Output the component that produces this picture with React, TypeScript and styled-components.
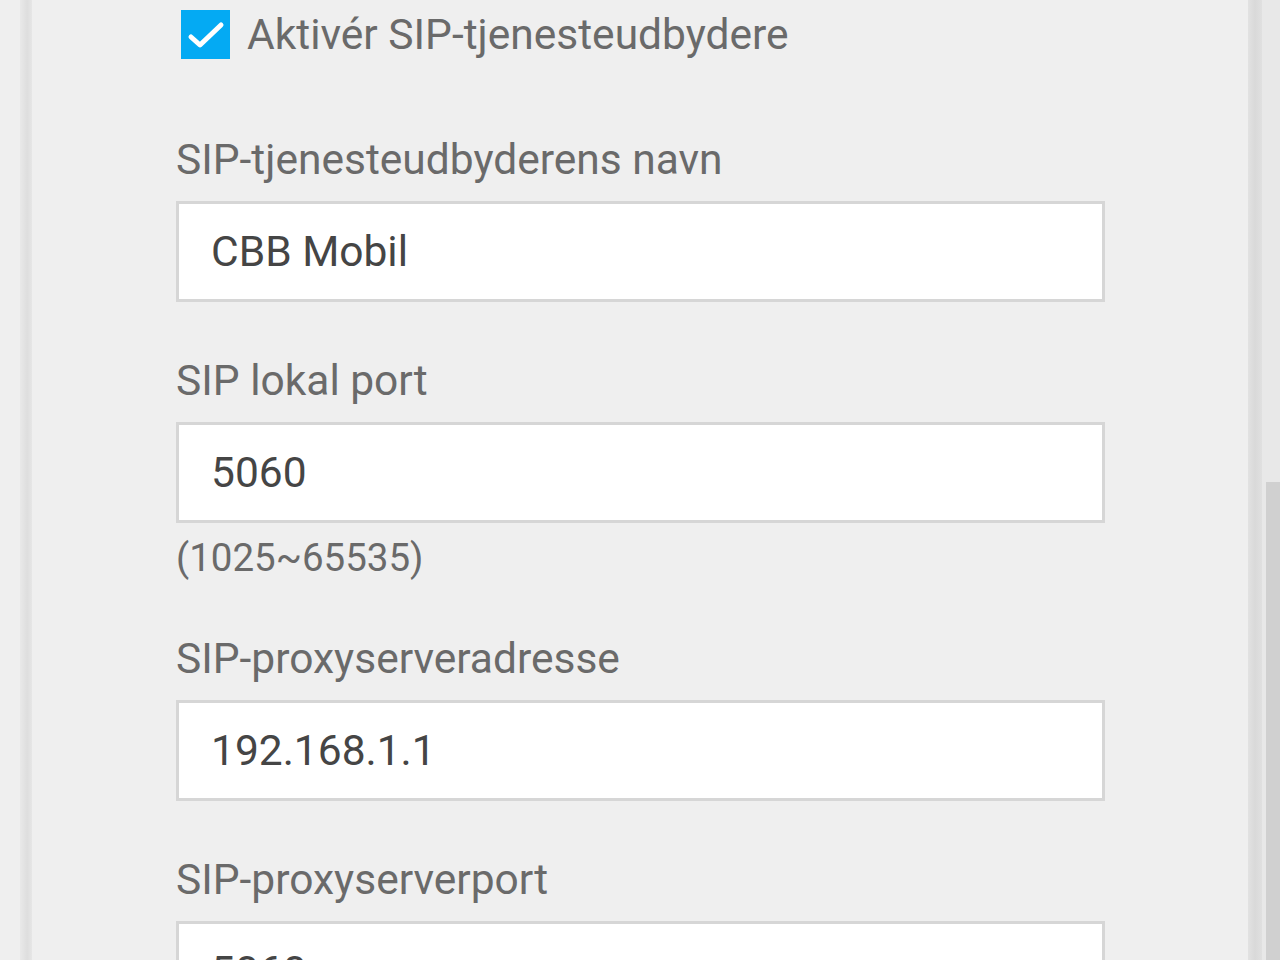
import styled, { createGlobalStyle } from "styled-components";

const GlobalStyle = createGlobalStyle`
  html, body {
    margin: 0;
    padding: 0;
    background: #ececec;
    font-family: Roboto, "Noto Sans", "Liberation Sans", sans-serif;
  }
  #root {
    height: 960px;
    overflow: hidden;
  }
`;

interface FieldProps {
  label: string;
  value: string;
  hint?: string;
}

function Field({ label, value, hint }: FieldProps) {
  return (
    <FieldGroup>
      <FieldLabel>{label}</FieldLabel>
      <TextBox type="text" defaultValue={value} />
      {hint && <Hint>{hint}</Hint>}
    </FieldGroup>
  );
}

export default function App() {
  return (
    <>
      <GlobalStyle />
      <Frame>
        <LeftGutter />
        <LeftShadow />
        <Panel>
          {/* 체크박스 */}
          <CheckRow>
            <CheckBox>
              <svg width="49" height="49" viewBox="0 0 49 49">
                <path
                  d="M10 27 L19 35 L40 15"
                  fill="none"
                  stroke="#ffffff"
                  strokeWidth="5"
                  strokeLinecap="round"
                  strokeLinejoin="round"
                />
              </svg>
            </CheckBox>
            <CheckLabel>Aktivér SIP-tjenesteudbydere</CheckLabel>
          </CheckRow>

          {/* 입력 필드 */}
          <Field label="SIP-tjenesteudbyderens navn" value="CBB Mobil" />
          <Field label="SIP lokal port" value="5060" hint="(1025~65535)" />
          <Field label="SIP-proxyserveradresse" value="192.168.1.1" />
          <Field label="SIP-proxyserverport" value="5060" />
        </Panel>
        <RightEdge />
        <ScrollTrack>
          <ScrollSpacer />
          <ScrollThumb />
        </ScrollTrack>
      </Frame>
    </>
  );
}

const Frame = styled.div`
  display: flex;
  width: 1280px;
  height: 960px;
  overflow: hidden;
`;

const LeftGutter = styled.div`
  width: 20px;
  background: #efefef;
`;

const LeftShadow = styled.div`
  width: 12px;
  background: linear-gradient(to right, #e9e9e9, #dedede 60%, #e6e6e6);
`;

const Panel = styled.div`
  flex: 1;
  background: #efefef;
  padding: 10px 143px 0 144px;
  display: flex;
  flex-direction: column;
  gap: 55px;
`;

const RightEdge = styled.div`
  width: 14px;
  background: linear-gradient(to right, #e2e2e2, #d9d9d9 50%, #e0e0e0);
`;

const ScrollTrack = styled.div`
  width: 18px;
  background: #e8e8e8;
  display: flex;
  flex-direction: column;
  align-items: flex-end;
`;

const ScrollSpacer = styled.div`
  height: 482px;
`;

const ScrollThumb = styled.div`
  flex: 1;
  width: 14px;
  background: #d0d0d0;
`;

const CheckRow = styled.div`
  display: flex;
  align-items: center;
  gap: 17px;
  padding-left: 5px;
  margin-bottom: 22px;
`;

const CheckBox = styled.div`
  width: 49px;
  height: 49px;
  background: #04aaf3;
  display: flex;
  flex-shrink: 0;
`;

const CheckLabel = styled.span`
  font-size: 42.5px;
  line-height: 48px;
  color: #6a6a6a;
`;

const FieldGroup = styled.div`
  display: flex;
  flex-direction: column;
`;

const FieldLabel = styled.label`
  font-size: 42.5px;
  line-height: 48px;
  color: #6a6a6a;
  margin-bottom: 17px;
`;

const TextBox = styled.input`
  box-sizing: border-box;
  width: 929px;
  height: 101px;
  border: 3px solid #d6d6d6;
  background: #ffffff;
  padding: 0 0 0 32px;
  font-family: Roboto, "Noto Sans", "Liberation Sans", sans-serif;
  font-size: 42.5px;
  color: #454545;
  outline: none;
`;

const Hint = styled.div`
  margin-top: 11px;
  margin-bottom: -2px;
  font-size: 38.5px;
  line-height: 48px;
  color: #6a6a6a;
`;
